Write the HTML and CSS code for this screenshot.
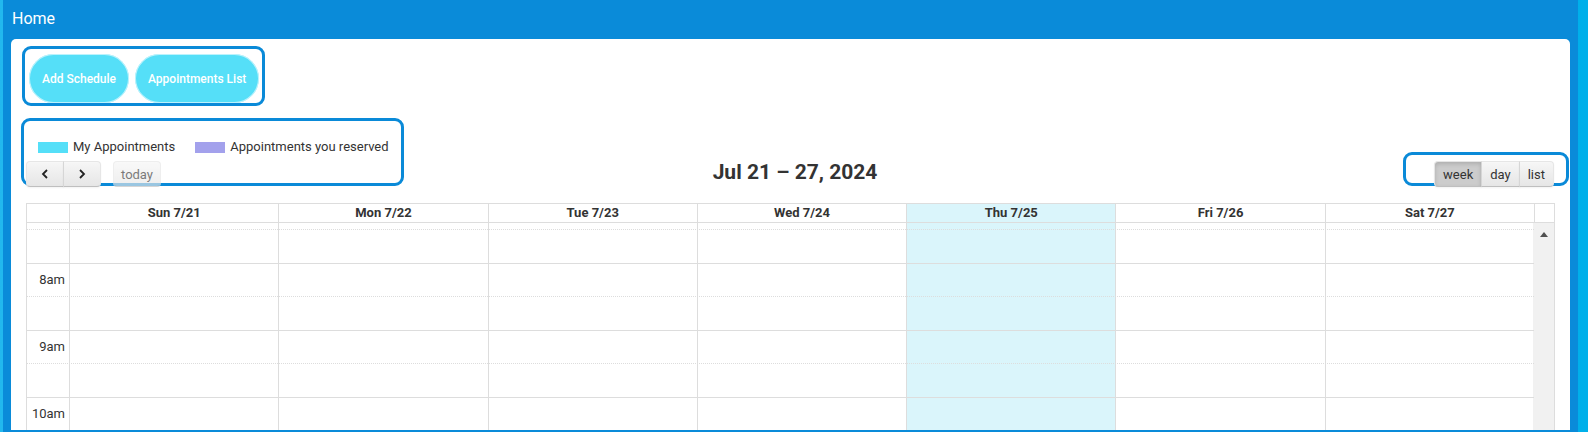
FILE: index.html
```html
<!DOCTYPE html>
<html lang="en">
<head>
  <meta charset="UTF-8" />
  <meta name="viewport" content="width=device-width, initial-scale=1" />
  <title>Home</title>
  <link rel="stylesheet" href="styles.css">
</head>
<body>

<div class="frame">
  <header class="topbar">Home</header>

  <main class="card">
    <div class="actions">
      <button class="pill">Add Schedule</button>
      <button class="pill">Appointments List</button>
    </div>

    <div class="toolbar">
      <div class="tb-left">
        <div class="legend">
          <span class="legend-item"><i class="swatch swatch-mine"></i>My Appointments</span>
          <span class="legend-item"><i class="swatch swatch-reserved"></i>Appointments you reserved</span>
        </div>
        <div class="nav">
          <div class="btn-group">
            <button class="fc-btn btn-icon" title="prev">
              <svg viewBox="0 0 8 10" width="8" height="10"><polyline points="6,1 2,5 6,9" /></svg>
            </button>
            <button class="fc-btn btn-icon" title="next">
              <svg viewBox="0 0 8 10" width="8" height="10"><polyline points="2,1 6,5 2,9" /></svg>
            </button>
          </div>
          <button class="fc-btn btn-today" disabled>today</button>
        </div>
      </div>

      <h2 class="tb-title">Jul 21 – 27, 2024</h2>

      <div class="tb-right">
        <div class="btn-group">
          <button class="fc-btn active">week</button>
          <button class="fc-btn">day</button>
          <button class="fc-btn">list</button>
        </div>
      </div>
    </div>

    <div class="cal">
      <div class="cal-head">
        <div class="hd-axis"></div>
        <div class="hd-day">Sun 7/21</div>
        <div class="hd-day">Mon 7/22</div>
        <div class="hd-day">Tue 7/23</div>
        <div class="hd-day">Wed 7/24</div>
        <div class="hd-day today">Thu 7/25</div>
        <div class="hd-day">Fri 7/26</div>
        <div class="hd-day">Sat 7/27</div>
        <div class="hd-gutter"></div>
      </div>

      <div class="cal-body">
        <div class="timegrid">
          <div class="cols">
            <div class="col-axis"></div>
            <div class="col"></div>
            <div class="col"></div>
            <div class="col"></div>
            <div class="col"></div>
            <div class="col today"></div>
            <div class="col"></div>
            <div class="col"></div>
          </div>
          <div class="slats">
            <div class="slat slat-cut"></div>
            <div class="slat minor"></div>
            <div class="slat"><span class="axis">8am</span></div>
            <div class="slat minor"></div>
            <div class="slat"><span class="axis">9am</span></div>
            <div class="slat minor"></div>
            <div class="slat"><span class="axis">10am</span></div>
            <div class="slat minor"></div>
          </div>
        </div>
        <div class="scrollbar"><span class="arrow-up"></span></div>
      </div>
    </div>
  </main>
</div>

</body>
</html>
```

FILE: styles.css
```css
body {
  margin: 0;
  height: 432px;
  overflow: hidden;
  background: linear-gradient(90deg, #22b8ee 0%, #0096dc 50%, #00b0ea 100%);
  font-family: Roboto, "Noto Sans", sans-serif;
  color: #333;
}
.frame {
  height: 432px;
  box-sizing: border-box;
  margin: 0 10px 0 3px;
  padding: 0 8px 2px;
  background-color: #0a8bd9;
}
.topbar {
  height: 39px;
  line-height: 37px;
  padding-left: 1px;
  color: #fff;
  font-size: 16px;
}
.card {
  height: 391px;
  overflow: hidden;
  background: #fff;
  border-radius: 5px 5px 0 0;
}

/* annotated blocks */
.actions,
.tb-left,
.tb-right {
  border: 3px solid #0a8ad8;
  border-radius: 9px;
}
.actions {
  display: inline-flex;
  gap: 6px;
  margin: 7px 0 0 11px;
  padding: 5px 3px 0 4px;
}
.pill {
  height: 49px;
  padding: 0 13px;
  border: none;
  border-radius: 25px;
  background-color: #55dff8;
  box-shadow: 0 0 0 1px rgba(255,255,255,0.6) inset;
  color: #fff;
  font-family: Roboto, sans-serif;
  font-size: 12px;
  font-weight: 500;
}

.toolbar {
  display: grid;
  grid-template-columns: 1fr auto 1fr;
  align-items: end;
  margin: 12px 1px 0 10px;
}
.tb-left {
  justify-self: start;
  padding: 18px 12px 0 2px;
}
.legend {
  display: flex;
  gap: 20px;
  padding-left: 12px;
  font-size: 13px;
  line-height: 16px;
}
.legend-item {
  display: flex;
  align-items: center;
}
.swatch {
  width: 30px;
  height: 11px;
  margin-right: 5px;
}
.swatch-mine { background-color: #55dff8; }
.swatch-reserved { background-color: #a3a1ec; }
.nav {
  display: flex;
  gap: 12px;
  margin: 6px 0 -4px;
}
.tb-title {
  margin: 0 0 1px;
  font-size: 21px;
  line-height: 26px;
  font-weight: 700;
  color: #333;
}
.tb-right {
  justify-self: end;
  padding: 6px 12px 0 28px;
}
.tb-right .btn-group {
  margin-bottom: -4px;
}

.btn-group {
  display: flex;
}
.fc-btn {
  height: 26px;
  padding: 0 8px;
  border: 1px solid #e6e6e6;
  border-bottom-color: #bfbfbf;
  border-radius: 4px;
  background: linear-gradient(#f6f6f6, #e6e6e6);
  box-shadow: inset 0 1px 0 rgba(255,255,255,0.2), 0 1px 2px rgba(0,0,0,0.05);
  color: #333;
  font-family: Roboto, sans-serif;
  font-size: 13px;
}
.btn-group .fc-btn { border-radius: 0; }
.btn-group .fc-btn + .fc-btn { margin-left: -1px; border-left-color: #d6d6d6; }
.btn-group .fc-btn:first-child { border-radius: 4px 0 0 4px; }
.btn-group .fc-btn:last-child { border-radius: 0 4px 4px 0; }
.fc-btn.active {
  background: #ccc;
  box-shadow: inset 0 2px 4px rgba(0,0,0,0.15), 0 1px 2px rgba(0,0,0,0.05);
}
.btn-icon {
  width: 38px;
  display: flex;
  align-items: center;
  justify-content: center;
}
.btn-icon svg {
  fill: none;
  stroke: #222;
  stroke-width: 1.8;
}
.btn-today {
  padding: 0 7px;
  opacity: 0.65;
  box-shadow: none;
}

/* calendar grid */
.cal {
  margin: 17px 15px 0;
  border: 1px solid #ddd;
}
.cal-head {
  display: grid;
  grid-template-columns: 42px repeat(7, 1fr) 20px;
  border-bottom: 1px solid #ddd;
}
.hd-day,
.hd-gutter {
  border-left: 1px solid #ddd;
}
.hd-day {
  font-size: 13px;
  font-weight: 700;
  line-height: 18px;
  text-align: center;
}
.hd-day.today,
.col.today {
  background-color: #daf5fb;
}
.cal-body {
  display: flex;
  height: 260px;
}
.timegrid {
  flex: 1;
  display: grid;
}
.cols,
.slats {
  grid-area: 1 / 1;
}
.cols {
  display: grid;
  grid-template-columns: 42px repeat(7, 1fr);
}
.col {
  border-left: 1px solid #ddd;
}
.slats {
  position: relative;
  z-index: 1;
}
.slat {
  box-sizing: border-box;
  height: 33.5px;
  border-top: 1px solid #ddd;
}
.slat.minor {
  border-top-style: dotted;
}
.slat-cut {
  height: 6px;
  border-top: none;
}
.axis {
  display: flex;
  align-items: center;
  justify-content: flex-end;
  box-sizing: border-box;
  width: 42px;
  height: 100%;
  padding-right: 4px;
  font-size: 13px;
}
.scrollbar {
  width: 21px;
  margin-left: -1px;
  background-color: #f1f1f1;
  display: flex;
  justify-content: center;
}
.arrow-up {
  width: 0;
  height: 0;
  margin-top: 9px;
  border-left: 4px solid transparent;
  border-right: 4px solid transparent;
  border-bottom: 5px solid #505050;
}
```
